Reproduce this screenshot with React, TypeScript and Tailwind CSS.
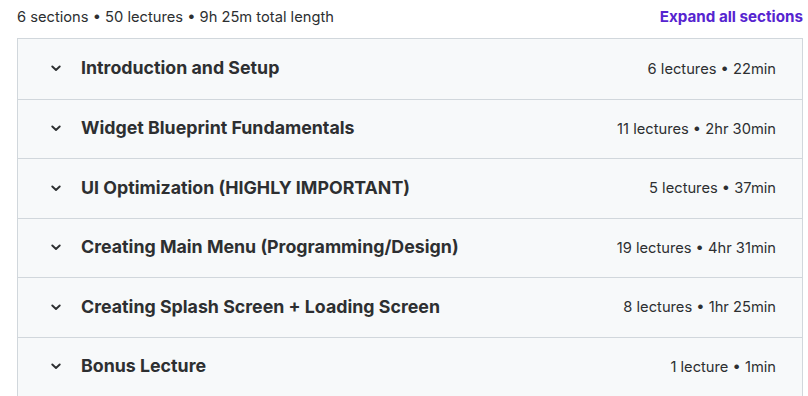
import React from 'react'

const sections = [
  { title: 'Introduction and Setup', meta: '6 lectures • 22min' },
  { title: 'Widget Blueprint Fundamentals', meta: '11 lectures • 2hr 30min' },
  { title: 'UI Optimization (HIGHLY IMPORTANT)', meta: '5 lectures • 37min' },
  { title: 'Creating Main Menu (Programming/Design)', meta: '19 lectures • 4hr 31min' },
  { title: 'Creating Splash Screen + Loading Screen', meta: '8 lectures • 1hr 25min' },
  { title: 'Bonus Lecture', meta: '1 lecture • 1min' },
]

function Chevron() {
  return (
    <svg width="10" height="7" viewBox="0 0 10 7" fill="none" className="shrink-0">
      <path d="M1.3 1.5 L5 5 L8.7 1.5" stroke="#2d2f31" strokeWidth="1.9" strokeLinecap="round" strokeLinejoin="round" />
    </svg>
  )
}

export default function App() {
  return (
    <div className="w-[808px] h-[396px] bg-white pl-[17px] pr-[5px] text-[#2d2f31] font-['Inter',sans-serif]">
      <div className="flex items-center justify-between h-[34px] mb-[4px]">
        <span className="text-[14.7px]">6 sections • 50 lectures • 9h 25m total length</span>
        <button className="text-[15.2px] font-bold text-[#5624d0]">Expand all sections</button>
      </div>
      <div className="border border-[#d1d7dc] bg-[#f7f9fa]">
        {sections.map((s) => (
          <div
            key={s.title}
            className="flex items-center h-[59.5px] pl-[33px] pr-[26px] border-t border-[#d1d7dc] first:border-t-0"
          >
            <Chevron />
            <span className="ml-[20px] flex-1 text-[17.8px] font-bold leading-[24px] -mt-[1px]">{s.title}</span>
            <span className="text-[14.7px]">{s.meta}</span>
          </div>
        ))}
      </div>
    </div>
  )
}
